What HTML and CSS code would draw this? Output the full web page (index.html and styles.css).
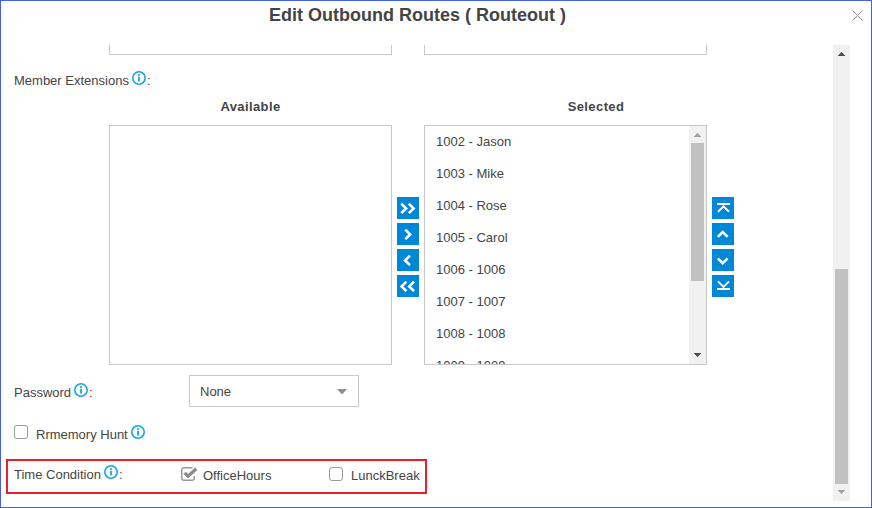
FILE: index.html
```html
<!DOCTYPE html>
<html lang="en">
<head>
<meta charset="utf-8">
<title>Edit Outbound Routes</title>
<link rel="stylesheet" href="styles.css">
</head>
<body>
<svg class="defs" aria-hidden="true">
  <symbol id="info" viewBox="0 0 14 14"><circle cx="7" cy="7" r="6.2" fill="none" stroke="#1aa5d8" stroke-width="1.6"/><path d="M7 3.2v1.7M7 5.8v4.7" stroke="#1aa5d8" stroke-width="1.8"/></symbol>
  <symbol id="up" viewBox="0 0 17 17"><path d="M5 11h7v-1h-1V9h-1V8H9V7H8v1H7v1H6v1H5z" fill="currentColor"/></symbol>
  <symbol id="down" viewBox="0 0 17 17"><path d="M5 6h7v1h-1v1h-1v1H9v1H8V9H7V8H6V7H5z" fill="currentColor"/></symbol>
</svg>
<div class="dialog">
  <header class="titlebar">
    <h1>Edit Outbound Routes ( Routeout )</h1>
    <svg class="close" viewBox="0 0 11 11"><path d="M.5.5l10 10M10.5.5l-10 10" stroke="#999" fill="none"/></svg>
  </header>
  <div class="viewport">
    <main class="form">
      <div class="pair previous"><div class="tail"></div><div class="tail"></div></div>
      <div class="label member"><span>Member Extensions</span><svg class="info"><use href="#info"/></svg><span>:</span></div>
      <div class="pair heads"><h2>Available</h2><h2 class="selected">Selected</h2></div>
      <div class="transfer">
        <div class="list"></div>
        <div class="buttons">
          <button><svg viewBox="0 0 22 22"><path d="M4.3 6.6l4.8 4.8-4.8 4.8M11.8 6.6l4.8 4.8-4.8 4.8"/></svg></button>
          <button><svg viewBox="0 0 22 22"><path d="M8.3 6.6l4.8 4.8-4.8 4.8"/></svg></button>
          <button><svg viewBox="0 0 22 22"><path d="M12.9 6.6l-4.8 4.8 4.8 4.8"/></svg></button>
          <button><svg viewBox="0 0 22 22"><path d="M9.4 6.6l-4.8 4.8 4.8 4.8M17 6.6l-4.8 4.8 4.8 4.8"/></svg></button>
        </div>
        <div class="list">
          <ul>
            <li>1002 - Jason</li><li>1003 - Mike</li><li>1004 - Rose</li><li>1005 - Carol</li>
            <li>1006 - 1006</li><li>1007 - 1007</li><li>1008 - 1008</li><li>1009 - 1009</li>
          </ul>
          <div class="scrollbar"><svg class="dim"><use href="#up"/></svg><div class="thumb thumb-list"></div><svg class="end"><use href="#down"/></svg></div>
        </div>
        <div class="buttons">
          <button><svg class="thin" viewBox="0 0 22 22"><path d="M5 7h13M6 14.8l5.5-5.5 5.5 5.5"/></svg></button>
          <button><svg viewBox="0 0 22 22"><path d="M5.8 13.9l4.9-4.9 4.9 4.9"/></svg></button>
          <button><svg viewBox="0 0 22 22"><path d="M5.8 9.3l4.9 4.9 4.9-4.9"/></svg></button>
          <button><svg class="thin" viewBox="0 0 22 22"><path d="M5 14h13M6 6.4l5.5 5.5L17 6.4"/></svg></button>
        </div>
      </div>
      <div class="row password">
        <div class="label"><span>Password</span><svg class="info"><use href="#info"/></svg><span>:</span></div>
        <div class="select"><span>None</span><svg viewBox="0 0 10 5"><path d="M0 0h10L5.5 5h-1z" fill="#909090"/></svg></div>
      </div>
      <div class="row hunt"><span class="check"></span><span class="caption">Rrmemory Hunt</span><svg class="info"><use href="#info"/></svg></div>
      <div class="row time">
        <div class="label"><span>Time Condition</span><svg class="info"><use href="#info"/></svg><span>:</span></div>
        <div class="option office"><svg class="checked" viewBox="0 0 17 14"><path d="M11.5.75H3A2.25 2.25 0 0 0 .75 3v8A2.25 2.25 0 0 0 3 13.25h8A2.25 2.25 0 0 0 13.25 11V9" fill="none" stroke="#999" stroke-width="1.5"/><path d="M3.6 5.8l3.5 3.5 8.2-7.5" fill="none" stroke="#8c8c8c" stroke-width="3.3"/></svg><span>OfficeHours</span></div>
        <div class="option"><span class="check"></span><span>LunckBreak</span></div>
      </div>
    </main>
    <div class="scrollbar"><svg><use href="#up"/></svg><div class="thumb thumb-page"></div><svg class="dim end"><use href="#down"/></svg></div>
  </div>
</div>
</body>
</html>
```
FILE: styles.css
```css
* { box-sizing: border-box; }
body { margin: 0; font: 13px/16px "Liberation Sans", Arial, sans-serif; color: #444; background: #fff; }
.defs { position: absolute; width: 0; height: 0; }
svg { display: block; flex: none; }
.dialog { width: 872px; height: 508px; border: 1px solid #4361ee; overflow: hidden; }
.titlebar { display: flex; height: 44px; padding-left: 268px; }
h1 { margin: 3px 0 0; width: 582px; font-size: 18px; line-height: 22px; white-space: nowrap; }
.close { width: 11px; height: 11px; margin: 9px 0 0 1px; }
.viewport { display: flex; height: 456px; }
.form { width: 832px; padding-left: 13px; }
.pair { display: grid; grid-template-columns: 283px 283px; column-gap: 32px; padding-left: 95px; }
.tail { height: 10px; border: 1px solid #c8c8c8; border-top: 0; }
.label { display: flex; align-items: center; white-space: nowrap; }
.info { width: 14px; height: 14px; margin: -5px 1px 0 3px; }
.member { height: 42px; padding-top: 9px; }
.heads { height: 28px; }
h2 { margin: 2px 0 0; font-size: 13px; line-height: 16px; text-align: center; letter-spacing: .4px; }
.selected { padding-left: 61px; }
.transfer { display: flex; height: 240px; padding-left: 95px; }
.list { display: flex; width: 283px; border: 1px solid #c8c8c8; overflow: hidden; }
.list ul { flex: 1; margin: 0; padding: 0 0 0 11px; list-style: none; }
.list li { height: 32px; line-height: 32px; }
.buttons { display: flex; flex-direction: column; gap: 4px; margin: 72px 5px 0; }
button { width: 22px; height: 22px; padding: 0; border: 0; background: #0088d8; }
button svg { width: 22px; height: 22px; fill: none; stroke: #fff; stroke-width: 2.6; }
button .thin { stroke-width: 2; }
.scrollbar { display: flex; flex-direction: column; width: 17px; background: #f1f1f1; color: #505050; }
.scrollbar svg { width: 17px; height: 17px; }
.scrollbar .dim { color: #a3a3a3; }
.scrollbar .end { margin-top: auto; }
.thumb { width: 13px; margin-left: 2px; background: #c1c1c1; }
.thumb-list { height: 138px; }
.thumb-page { height: 215px; margin-top: 207px; }
.row { display: flex; align-items: center; }
.password { height: 32px; margin-top: 10px; }
.password .label { width: 175px; padding-top: 4px; }
.password .info { margin-top: -7px; }
.select { display: flex; align-items: center; justify-content: space-between; width: 170px; height: 32px; padding: 1px 11px 0 10px; border: 1px solid #c8c8c8; }
.select svg { width: 10px; height: 5px; }
.hunt { height: 30px; margin-top: 11px; }
.hunt .check { margin-right: 8px; margin-top: -2px; }
.hunt .caption { margin-top: 3px; }
.hunt .info { margin-top: -3px; }
.check { flex: none; width: 14px; height: 14px; border: 1.5px solid #999; border-radius: 3px; }
.time { width: 421px; height: 35px; margin: 11px 0 0 -8px; padding-left: 6px; border: 2px solid #e8202a; }
.time .label { width: 167px; margin-top: -3px; }
.time .info { margin-top: -7px; }
.option { display: flex; align-items: center; gap: 8px; margin-top: -1px; }
.option .check { margin-top: -4px; }
.office { width: 148px; gap: 5px; }
.checked { width: 17px; height: 14px; margin-top: -4px; }
```
